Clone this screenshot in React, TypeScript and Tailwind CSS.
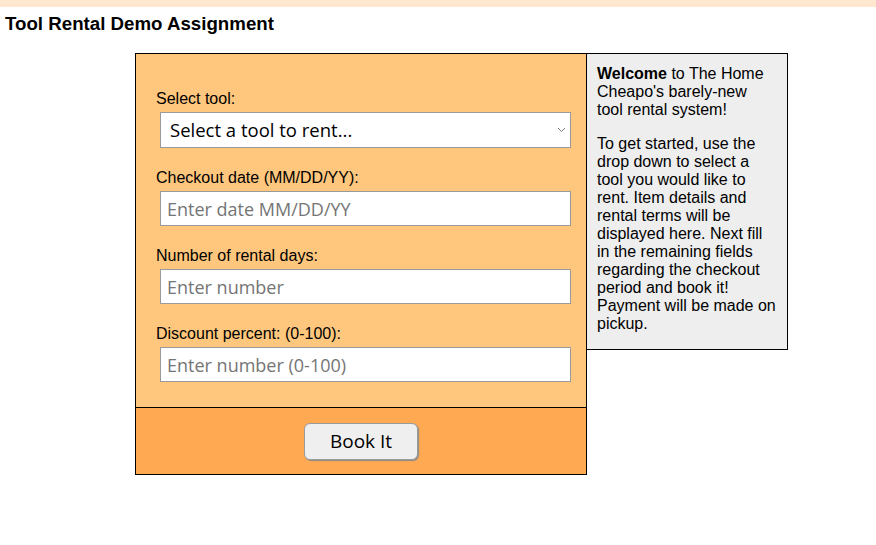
import React from "react"

const fields = [
  { label: "Checkout date (MM/DD/YY):", placeholder: "Enter date MM/DD/YY" },
  { label: "Number of rental days:", placeholder: "Enter number" },
  { label: "Discount percent: (0-100):", placeholder: "Enter number (0-100)" },
]

export default function App() {
  return (
    <div className="min-h-[545px] bg-white font-['Liberation_Sans',Arial,sans-serif] text-black">
      <div className="h-[7px] bg-[#ffe8cf]" />
      <h1 className="px-[5px] pt-[7px] text-[18.7px] font-bold leading-[20px]">Tool Rental Demo Assignment</h1>

      <div className="ml-[135px] mt-[19px] flex items-start">
        <form className="w-[452px] border border-black bg-[#ffc77d]">
          <div className="pl-[20px] pr-[15px] pt-[36px] pb-[25px]">
            <label className="block text-[16px] leading-[18px]">Select tool:</label>
            <div className="relative ml-[4px] mt-[4px] w-[411px]">
              <select className="h-[36px] w-full appearance-none border border-[#9a9a9a] bg-white pl-[9px] font-['Open_Sans','Noto_Sans',sans-serif] text-[18.5px] text-black outline-none">
                <option>Select a tool to rent...</option>
              </select>
              <svg className="pointer-events-none absolute right-[5px] top-[15px]" width="9" height="6" viewBox="0 0 9 6" fill="none">
                <path d="M1 1l3.5 3.5L8 1" stroke="#7a7a7a" strokeWidth="1" />
              </svg>
            </div>

            {fields.map((f) => (
              <div key={f.label} className="mt-[21px]">
                <label className="block text-[16px] leading-[18px]">{f.label}</label>
                <input
                  placeholder={f.placeholder}
                  className="ml-[4px] mt-[4px] block h-[35px] w-[411px] border border-[#9a9a9a] bg-white px-[6px] font-['Open_Sans','Noto_Sans',sans-serif] text-[18px] outline-none placeholder:text-[#757575]"
                />
              </div>
            ))}
          </div>

          <div className="flex h-[67px] items-center justify-center border-t border-black bg-[#ffaa52]">
            <button
              type="button"
              className="h-[37px] w-[114px] rounded-[6px] border border-[#9b9b9b] bg-[#efefef] font-['Open_Sans','Noto_Sans',sans-serif] text-[19px] shadow-[1px_1px_1px_#8a8a8a]"
            >
              Book It
            </button>
          </div>
        </form>

        <div className="w-[201px] border border-l-0 border-black bg-[#eeeeee] px-[10px] pt-[11px] pb-[16px] text-[16px] leading-[18px]">
          <p>
            <b>Welcome</b> to The Home Cheapo's barely-new tool rental system!
          </p>
          <p className="mt-[16px]">
            To get started, use the drop down to select a tool you would like to rent. Item details and rental terms will be displayed here. Next fill in the remaining fields regarding the checkout period and book it! Payment will be made on pickup.
          </p>
        </div>
      </div>
    </div>
  )
}
